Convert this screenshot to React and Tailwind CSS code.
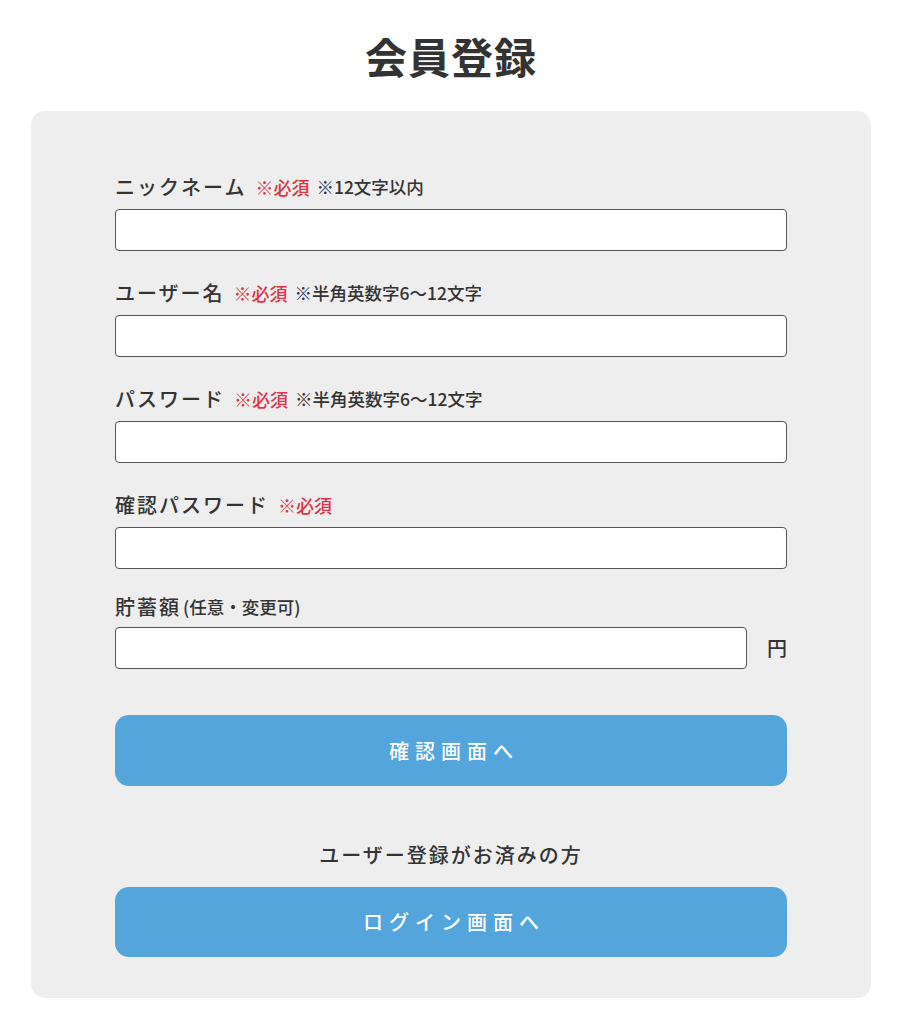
import React from "react";

const fields = [
  { label: "ニックネーム", required: true, note: "※12文字以内" },
  { label: "ユーザー名", required: true, note: "※半角英数字6〜12文字" },
  { label: "パスワード", required: true, note: "※半角英数字6〜12文字", type: "password" },
  { label: "確認パスワード", required: true, type: "password" },
];

const inputClass =
  "block h-[42px] rounded-[4px] border-[1.5px] border-[#555] bg-white px-3 text-[18px] outline-none";

const Field = ({ label, required, note, type = "text" }) => (
  <div className="mb-[28px]">
    <div className="mb-[8px] flex h-[28px] items-center font-medium">
      <span className="text-[20px] tracking-[2px] text-[#333]">{label}</span>
      {required && <span className="ml-[9px] text-[18px] text-[#dc3545]">※必須</span>}
      {note && <span className="ml-[7px] text-[17.5px] text-[#333]">{note}</span>}
    </div>
    <input type={type} className={`${inputClass} w-full`} />
  </div>
);

export default function App() {
  return (
    <div
      className="min-h-[1024px] bg-white pb-[26px]"
      style={{ fontFamily: '"Noto Sans CJK JP", "Noto Sans", sans-serif' }}
    >
      {/* Title */}
      <div className="flex h-[111px] items-center justify-center pt-[1px]">
        <h1 className="text-[42px] font-bold leading-none tracking-[1px] text-[#333]">会員登録</h1>
      </div>

      {/* Form panel */}
      <div className="mx-[31px] rounded-[14px] bg-[#eeeeee] px-[84px] pb-[41px] pt-[62px]">
        {fields.map((f) => (
          <Field key={f.label} {...f} />
        ))}

        {/* Savings */}
        <div className="-mt-[4px]">
          <div className="mb-[6px] flex h-[28px] items-center font-medium">
            <span className="text-[20px] tracking-[2px] text-[#333]">貯蓄額</span>
            <span className="ml-[2px] text-[17.5px] text-[#333]">(任意・変更可)</span>
          </div>
          <div className="flex items-center">
            <input type="text" className={`${inputClass} w-[632px]`} />
            <span className="ml-auto text-[20px] font-medium text-[#333]">円</span>
          </div>
        </div>

        <button className="mt-[46px] flex h-[71px] w-full items-center justify-center rounded-[14px] bg-[#53a5db] pl-[6px] text-[20px] font-medium tracking-[6px] text-white">
          確認画面へ
        </button>

        <p className="mt-[55px] h-[28px] text-center text-[20px] font-medium leading-[28px] tracking-[2px] text-[#333]">
          ユーザー登録がお済みの方
        </p>

        <button className="mt-[18px] flex h-[70px] w-full items-center justify-center rounded-[14px] bg-[#53a5db] pl-[6px] text-[20px] font-medium tracking-[6px] text-white">
          ログイン画面へ
        </button>
      </div>
    </div>
  );
}
